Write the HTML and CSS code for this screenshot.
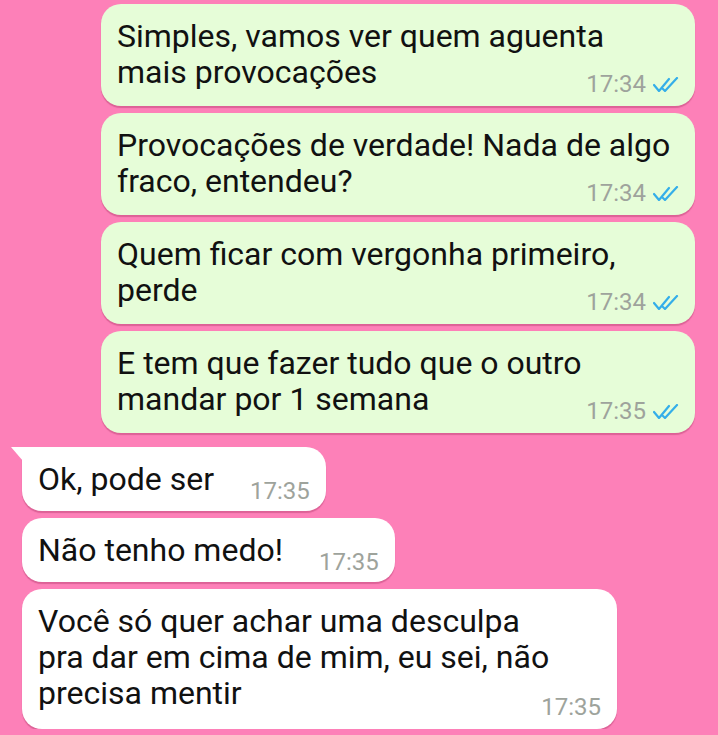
FILE: index.html
```html
<!DOCTYPE html>
<html>
<head>
<meta charset="UTF-8">
<title>Conversa</title>
<link rel="stylesheet" href="styles.css">
</head>
<body>

<div class="chat">

	<!-- mensagens enviadas -->
	<div class="msg out">
		<p>Simples, vamos ver quem aguenta<br>mais provocações<span class="meta">17:34 <svg class="tick" viewBox="0 0 26 15"><path d="M1 8 L6 14 L16 2 M10 12 L12 14 L24 1"/></svg></span></p>
	</div>
	<div class="msg out">
		<p>Provocações de verdade! Nada de algo<br>fraco, entendeu?<span class="meta">17:34 <svg class="tick" viewBox="0 0 26 15"><path d="M1 8 L6 14 L16 2 M10 12 L12 14 L24 1"/></svg></span></p>
	</div>
	<div class="msg out">
		<p>Quem ficar com vergonha primeiro,<br>perde<span class="meta">17:34 <svg class="tick" viewBox="0 0 26 15"><path d="M1 8 L6 14 L16 2 M10 12 L12 14 L24 1"/></svg></span></p>
	</div>
	<div class="msg out">
		<p>E tem que fazer tudo que o outro<br>mandar por 1 semana<span class="meta">17:35 <svg class="tick" viewBox="0 0 26 15"><path d="M1 8 L6 14 L16 2 M10 12 L12 14 L24 1"/></svg></span></p>
	</div>

	<!-- mensagens recebidas -->
	<div class="msg in first">
		<p>Ok, pode ser<span class="meta">17:35</span></p>
	</div>
	<div class="msg in">
		<p>Não tenho medo!<span class="meta">17:35</span></p>
	</div>
	<div class="msg in wide">
		<p>Você só quer achar uma desculpa<br>pra dar em cima de mim, eu sei, não<br>precisa mentir<span class="meta">17:35</span></p>
	</div>

</div>

</body>
</html>
```

FILE: styles.css
```css
body
{
	margin: 0;
	background-color: #fd80b8;
	font-family: Roboto, "Noto Sans", sans-serif;
	color: #111;
}
.chat
{
	display: flex;
	flex-direction: column;
	padding-top: 4px;
	gap: 7px;
}
.msg
{
	position: relative;
	border-radius: 20px;
	padding: 14px 16px 8px 16px;
	box-shadow: 0 2px 1px rgba(160, 40, 90, 0.35);
}
.msg p
{
	margin: 0;
	font-size: 32px;
	line-height: 36px;
	display: flow-root;
}
.out
{
	align-self: flex-end;
	margin-right: 23px;
	width: 594px;
	box-sizing: border-box;
	padding-bottom: 10px;
	background-color: #e6fdd8;
}
.in
{
	align-self: flex-start;
	margin-left: 22px;
	max-width: 595px;
	box-sizing: border-box;
	background-color: #ffffff;
}
.in.first
{
	margin-top: 7px;
	border-top-left-radius: 0;
}
.in.first::before
{
	content: "";
	position: absolute;
	left: -11px;
	top: 0;
	width: 12px;
	height: 14px;
	background-color: #ffffff;
	clip-path: polygon(0 0, 100% 0, 100% 100%);
}
.in.wide
{
	width: 595px;
	padding-bottom: 10px;
}
.in.wide .meta
{
	margin-top: 20px;
}
.meta
{
	float: right;
	margin-top: 18px;
	margin-left: 36px;
	font-size: 24px;
	line-height: 24px;
	color: #9ea39c;
	display: flex;
	align-items: center;
	gap: 7px;
}
.tick
{
	width: 26px;
	height: 15px;
	fill: none;
	stroke: #34aee9;
	stroke-width: 2.2;
	stroke-linecap: round;
	stroke-linejoin: round;
}
```
